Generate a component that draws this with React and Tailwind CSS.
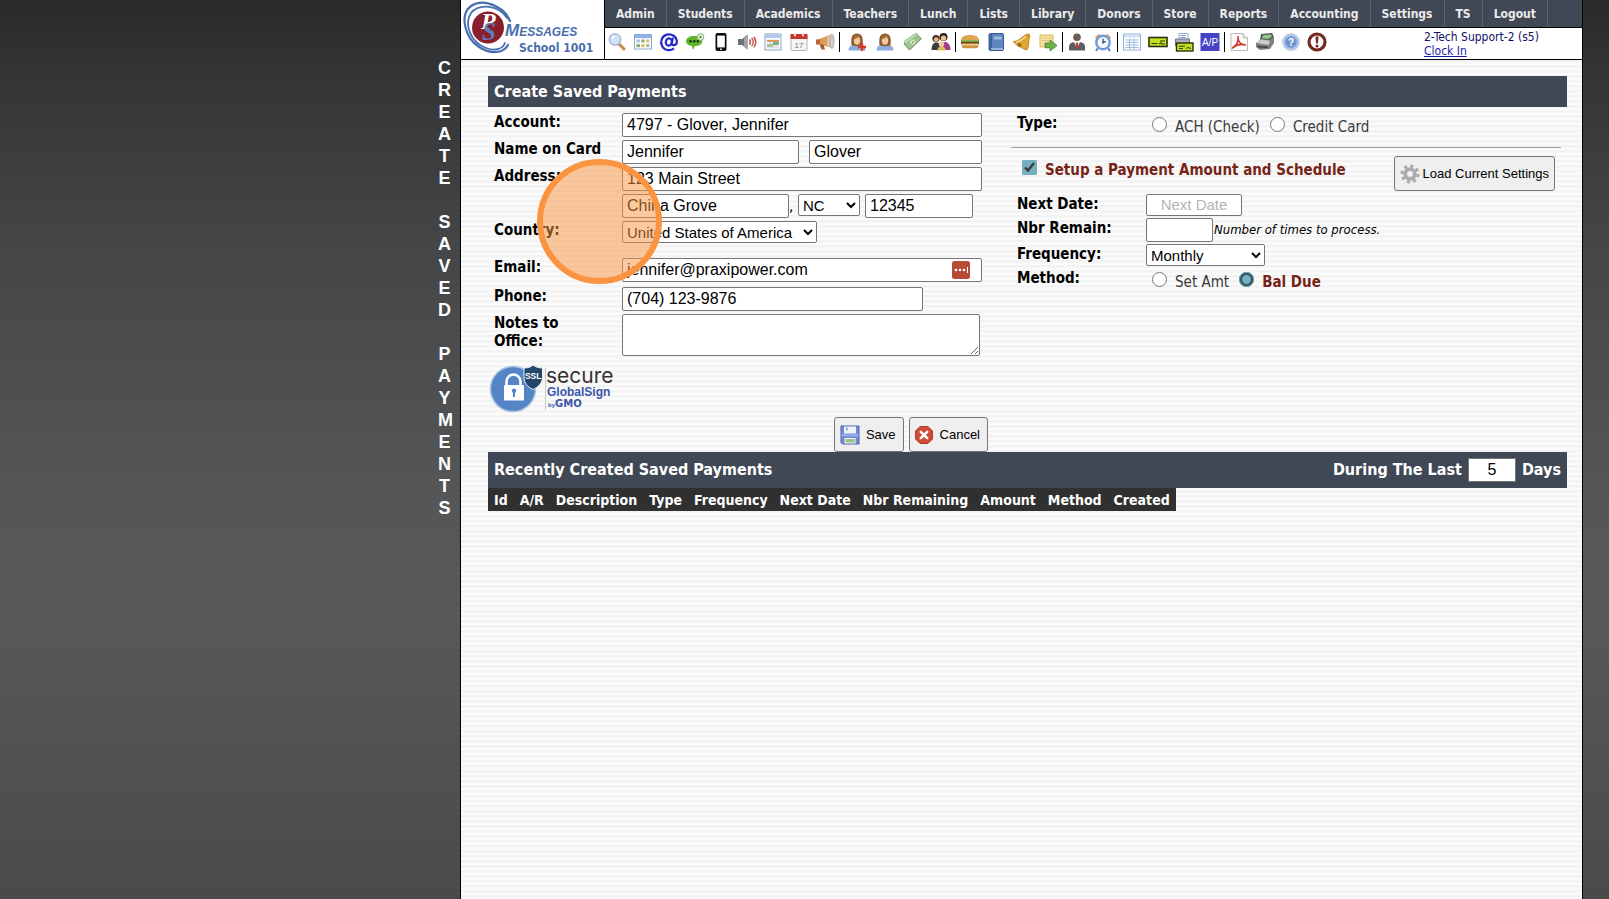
import React from "react";

const NAV = [
  "Admin", "Students", "Academics", "Teachers", "Lunch", "Lists", "Library", "Donors",
  "Store", "Reports", "Accounting", "Settings", "TS", "Logout",
];

const COLUMNS = [
  "Id", "A/R", "Description", "Type", "Frequency", "Next Date", "Nbr Remaining", "Amount", "Method", "Created",
];

function Icon({ children }) {
  return (
    <svg viewBox="0 0 20 20" className="h-5 w-5" aria-hidden="true">
      {children}
    </svg>
  );
}

const SearchIcon = () => (
  <Icon>
    <path d="M12 12l5 5" stroke="#c98a4c" strokeWidth="3" strokeLinecap="round" />
    <circle cx="8" cy="7.5" r="5.7" fill="#cfe3f8" stroke="#a9bcdc" strokeWidth="1.6" />
    <path d="M5 7a3.4 3.4 0 0 1 3-2.8" stroke="#fff" strokeWidth="1.4" fill="none" />
  </Icon>
);

const TableIcon = () => (
  <Icon>
    <rect x="1.5" y="2.5" width="17" height="14.5" fill="#fff" stroke="#8aa9d6" />
    <rect x="2" y="3" width="16" height="3.2" fill="#8db2e3" />
    <rect x="3.5" y="7.5" width="3.4" height="3" fill="#9fc7e8" />
    <rect x="8.2" y="7.5" width="3.4" height="3" fill="#8bb07c" />
    <rect x="13" y="7.5" width="3.4" height="3" fill="#e3c770" />
    <rect x="3.5" y="12.2" width="3.4" height="3" fill="#86a86a" />
    <rect x="8.2" y="12.2" width="3.4" height="3" fill="#e2bf6b" />
    <rect x="13" y="12.2" width="3.4" height="3" fill="#9cc4a4" />
  </Icon>
);

const AtIcon = () => (
  <Icon>
    <ellipse cx="9.800" cy="10" rx="3" ry="3.600" fill="none" stroke="#2a2ac8" strokeWidth="2.200" transform="rotate(15 9.800 10)" />
    <path d="M13.8 5.800l-1 5.800c-.2 2.500 5 2.200 5.100-2A7.900 7.900 0 1 0 15 16.400" fill="none" stroke="#2a2ac8" strokeWidth="2.200" />
  </Icon>
);

const ChatIcon = () => (
  <Icon>
    <path d="M9 4c5 0 8.400 2 8.400 5S14 14 10 14l-2 4-1-4C3.400 13.600 1 11.800 1 9.200 1 6 4.500 4 9 4z" fill="#62b52a" />
    <circle cx="15.500" cy="5" r="3.400" fill="#d9ecd0" stroke="#76a860" strokeWidth=".8" />
    <circle cx="15.500" cy="5" r="1.100" fill="#56704a" />
    <circle cx="5.500" cy="9.200" r="1.300" fill="#1c3a0c" />
    <circle cx="9.200" cy="9.200" r="1.300" fill="#1c3a0c" />
    <circle cx="12.900" cy="9.200" r="1.300" fill="#1c3a0c" />
  </Icon>
);

const PhoneIcon = () => (
  <Icon>
    <rect x="4.500" y="1" width="11" height="18" rx="2" fill="#0c0c0c" />
    <rect x="6.200" y="3.600" width="7.600" height="11.800" fill="#fff" />
    <circle cx="10" cy="17.200" r=".9" fill="#fff" />
  </Icon>
);

const SpeakerIcon = () => (
  <Icon>
    <path d="M1 7h4l5.500-4.500v15L5 13H1z" fill="#6f7377" />
    <path d="M7 5.400l3.500-2.900v15L7 14.600z" fill="#a2a5a9" />
    <path d="M12.400 7.500a4 4 0 0 1 0 5M14.600 6a6 6 0 0 1 0 8M16.800 4.800a8 8 0 0 1 0 10.400" fill="none" stroke="#c8504e" strokeWidth="1.500" />
  </Icon>
);

const ScheduleIcon = () => (
  <Icon>
    <rect x="2" y="2" width="16" height="16" fill="#fbfbff" stroke="#8ea4cf" />
    <rect x="2.500" y="2.500" width="15" height="3.500" fill="#b4c8ec" />
    <path d="M4 9h12M4 12h12M4 15h12M7 7v10M10 7v10M13 7v10" stroke="#c3cede" strokeWidth=".8" />
    <rect x="4" y="8" width="12" height="2" fill="#d79a5c" />
    <rect x="10" y="10" width="6" height="3" fill="#7fae8a" />
    <rect x="4" y="12" width="6" height="3" fill="#a5c38f" />
  </Icon>
);

const CalendarIcon = () => (
  <Icon>
    <rect x="2" y="2.500" width="16" height="16" rx="1" fill="#f5f5f5" stroke="#b5b5b5" />
    <path d="M1.500 2h17v5h-17z" fill="#c33a2c" />
    <rect x="5" y=".5" width="2" height="4" rx="1" fill="#f3d9d5" />
    <rect x="13" y=".5" width="2" height="4" rx="1" fill="#f3d9d5" />
    <text x="10" y="15.500" fontSize="8" textAnchor="middle" fill="#777" fontFamily="Liberation Sans, sans-serif">17</text>
  </Icon>
);

const MegaphoneIcon = () => (
  <Icon>
    <path d="M2 8l12-5v12L2 12z" fill="#d99a5c" />
    <path d="M1 7.500h4v5H1z" fill="#b5642a" />
    <path d="M4.500 12.500h4l1.500 5H6.500z" fill="#a05a2c" />
    <path d="M12 3.800v10.400l5 2.300V2z" fill="#e6c09a" />
    <ellipse cx="17" cy="9.300" rx="2" ry="7.300" fill="#cfcfd4" stroke="#a0a0a8" strokeWidth=".8" />
  </Icon>
);

const Person = () => (
  <>
    <path d="M1.500 18.500c0-4 2.500-6 8.500-6s8.500 2 8.500 6z" fill="#8cade0" />
    <path d="M4.500 13C3.500 5 5.500 1.500 10 1.500S16.500 5 15.500 13c-1.500 1.500-9.500 1.500-11 0z" fill="#8f5a2c" />
    <ellipse cx="10" cy="8.500" rx="3.200" ry="4.200" fill="#f0c9a0" />
    <path d="M6.500 7.200c2 0 4-1 5-2.500 .5 1.500 1.500 2.300 2.300 2.500L13 3.500H7.500z" fill="#a86e38" />
  </>
);

const PersonAddIcon = () => (
  <Icon>
    <Person />
    <path d="M15 11v8M11 15h8" stroke="#d8382c" strokeWidth="2.400" />
  </Icon>
);

const PersonIcon = () => (
  <Icon>
    <Person />
  </Icon>
);

const MoneyIcon = () => (
  <Icon>
    <path d="M1 12L13 2l5.500 4.500L6.500 18z" fill="#9cc58d" stroke="#6f9a60" />
    <path d="M1 9.500L13 1l2 1.500L2.500 12.500z" fill="#c1dcb4" stroke="#7faa70" strokeWidth=".7" />
    <ellipse cx="9.800" cy="10" rx="2.800" ry="2.200" fill="#dcebd4" transform="rotate(-40 9.800 10)" />
    <path d="M9 11.500l1.800-3" stroke="#5d8a50" />
  </Icon>
);

const GroupIcon = () => (
  <Icon>
    <circle cx="12.500" cy="5" r="4" fill="#2c2320" />
    <circle cx="12.500" cy="6.200" r="2.600" fill="#f0c095" />
    <path d="M9 17c0-4 2-7 5-7s5.500 3 5.500 8h-9z" fill="#a23c94" />
    <circle cx="5" cy="6.500" r="3.600" fill="#4a2c1c" />
    <circle cx="5.200" cy="7.500" r="2.300" fill="#eab98c" />
    <path d="M.5 18c0-5 2-7.500 5-7.500S10 13 10 18z" fill="#3c3c40" />
    <circle cx="10.500" cy="12.300" r="2.700" fill="#f0c8a0" />
    <path d="M6.500 18.500c0-3 1.500-4 4-4s4 1 4 4z" fill="#d9c25c" />
  </Icon>
);

const BurgerIcon = () => (
  <Icon>
    <path d="M1 8.500C1 4.500 5 3 10 3s9 1.500 9 5.500z" fill="#e0a552" />
    <rect x="1" y="8.200" width="18" height="2" fill="#78a63c" />
    <rect x="1" y="10" width="18" height="2.200" fill="#6d3a20" />
    <path d="M1 11.500h18l-3 1.500-4-1-4 1.500-4-1z" fill="#f0c944" />
    <path d="M1.500 13.200h17c0 2-1 3-3 3h-11c-2 0-3-1-3-3z" fill="#cf9140" />
  </Icon>
);

const BookIcon = () => (
  <Icon>
    <rect x="3" y="1.500" width="14.500" height="17" rx="1.500" fill="#5f86c0" stroke="#34588f" />
    <rect x="3.500" y="2" width="2.500" height="16" fill="#3d639e" />
    <rect x="8" y="4.500" width="7.500" height="3" fill="#9dbbe4" />
    <path d="M5 17h12" stroke="#d9e4f4" />
  </Icon>
);

const BellIcon = () => (
  <Icon>
    <path d="M1 9.500c6 0 8-4.500 14-7.500l3 2c-2 5-.5 9-3 14C11 17 4 13 1 9.500z" fill="#dfa734" stroke="#b07c1c" strokeWidth=".8" />
    <path d="M4 10c4-.5 7-3 10-5.500" stroke="#f8dc8c" strokeWidth="1.600" fill="none" />
    <circle cx="7.500" cy="13" r="2" fill="#a06a14" />
    <circle cx="16.500" cy="3" r="1.600" fill="#cd9327" />
  </Icon>
);

const NoteArrowIcon = () => (
  <Icon>
    <path d="M2 3h13v12H2z" fill="#f9e3a0" stroke="#d9b35c" />
    <path d="M4 6h9M4 8.500h7" stroke="#e2c27a" />
    <path d="M7 11h5V8l7 5.500L12 19v-3.200H7z" fill="#6db24a" stroke="#3f8128" strokeWidth=".8" />
  </Icon>
);

const ManagerIcon = () => (
  <Icon>
    <circle cx="10" cy="5.200" r="3.800" fill="#6c5a50" />
    <path d="M2 18.500V15c0-4 3-5 8-5s8 1 8 5v3.500z" fill="#5a5d63" />
    <path d="M7 10l3 7 3-7z" fill="#f4f4f4" />
    <path d="M9.200 10.500h1.600l.8 4.500-1.600 2-1.600-2z" fill="#c73a30" />
  </Icon>
);

const ClockIcon = () => (
  <Icon>
    <path d="M2 5.500L5.500 2 8 3.500 3.500 8zM18 5.500L14.500 2 12 3.500 16.500 8z" fill="#e0a050" />
    <path d="M5 16l-2 3M15 16l2 3" stroke="#5a82c0" strokeWidth="2" />
    <circle cx="10" cy="10.500" r="6.700" fill="#f5f9ff" stroke="#6e9bdc" strokeWidth="2.400" />
    <path d="M10 6.800v4l2.800-1.600" stroke="#33435c" strokeWidth="1.300" fill="none" />
  </Icon>
);

const SheetIcon = () => (
  <Icon>
    <rect x="1.500" y="2" width="17" height="16" fill="#fff" stroke="#8fb0dc" />
    <rect x="2" y="2.500" width="16" height="3" fill="#cfe0f4" />
    <path d="M3.500 8h13M3.500 10.500h13M3.500 13h13M3.500 15.500h13M7.500 6.500v10.500M12 6.500v10.500" stroke="#9fbce2" />
  </Icon>
);

const CheckIcon = () => (
  <Icon>
    <rect x="1" y="5.500" width="18" height="9" fill="#c4e020" stroke="#2b300c" strokeWidth="1.600" />
    <path d="M3.500 11.500h6M12 9h5M11 12l2-1 1 1h3" stroke="#353b0c" strokeWidth="1.200" fill="none" />
  </Icon>
);

const PrintCheckIcon = () => (
  <Icon>
    <path d="M5 1.500h9v6H5z" fill="#fff" stroke="#9fa8b8" />
    <path d="M6.500 3.500h5M6.500 5.500h5" stroke="#6a94d4" />
    <path d="M1.500 7h14v7h-14z" fill="#a9aec0" stroke="#70768a" />
    <rect x="2.500" y="11" width="16.500" height="8" fill="#c4e020" stroke="#2b300c" strokeWidth="1.400" />
    <path d="M5 14.200h6M5 16.500h4M12 16.500l2-1 3 1" stroke="#353b0c" fill="none" />
  </Icon>
);

const ApIcon = () => (
  <Icon>
    <rect x=".5" y="1" width="19" height="18" fill="#4644c4" />
    <text x="10" y="13.600" fontSize="10" textAnchor="middle" fill="#fff" fontFamily="Liberation Sans, sans-serif">A/P</text>
  </Icon>
);

const PdfIcon = () => (
  <Icon>
    <path d="M2 1.500h12l4.500 4.500v12.500H2z" fill="#fcfcfc" stroke="#b9b9b9" />
    <path d="M14 1.500V6h4.500" fill="#e8e8e8" stroke="#b9b9b9" />
    <path d="M3.500 16c4-2.500 6-7 5.500-11.500C8.500 9 11 12.500 16.500 13 12 11.500 8 12.500 3.500 16z" fill="none" stroke="#cf3328" strokeWidth="1.500" strokeLinejoin="round" />
  </Icon>
);

const ScannerIcon = () => (
  <Icon>
    <path d="M6 2l11-1 2 4-5 4-9-1z" fill="#4e5a50" />
    <path d="M8 3.200l8-.7 1 2-4 2.500-6-.7z" fill="#98c890" />
    <path d="M1 11l5-4 9 1 4-4v7l-4 6-10 1-4-3z" fill="#7d817c" />
    <path d="M1 11l5-3.500 9 1.200-1.500 4.300z" fill="#c9cdc8" />
    <path d="M2.500 14.500l10.500 1" stroke="#3c403c" strokeWidth="1.600" />
  </Icon>
);

const HelpIcon = () => (
  <Icon>
    <circle cx="10" cy="10" r="8.300" fill="#a9c2ea" stroke="#c6d0e0" strokeWidth="1.400" />
    <circle cx="10" cy="10" r="5.800" fill="#6d95d4" />
    <text x="10" y="13.600" fontSize="10" fontWeight="700" textAnchor="middle" fill="#fff" fontFamily="Liberation Sans, sans-serif">?</text>
  </Icon>
);

const AlertIcon = () => (
  <Icon>
    <circle cx="10" cy="10" r="8" fill="#fff" stroke="#702a22" strokeWidth="3.200" />
    <path d="M8.400 4.500h3.200l-.7 7H9.100z" fill="#702a22" />
    <circle cx="10" cy="14" r="1.500" fill="#702a22" />
  </Icon>
);

const GROUPS = [
  {
    wide: false,
    items: [
      ["Search", SearchIcon], ["Dashboard", TableIcon], ["Email", AtIcon], ["Chat", ChatIcon], ["Text", PhoneIcon],
      ["Voice", SpeakerIcon], ["Schedule", ScheduleIcon], ["Calendar", CalendarIcon], ["Announce", MegaphoneIcon],
    ],
  },
  { wide: true, items: [["Add person", PersonAddIcon], ["Person", PersonIcon], ["Payments", MoneyIcon], ["Families", GroupIcon]] },
  { wide: false, items: [["Lunch", BurgerIcon], ["Library", BookIcon], ["Bell", BellIcon], ["Forward note", NoteArrowIcon]] },
  { wide: false, items: [["Staff", ManagerIcon], ["Time clock", ClockIcon]] },
  { wide: false, items: [["Ledger", SheetIcon], ["Check", CheckIcon], ["Print check", PrintCheckIcon], ["Accounts payable", ApIcon]] },
  { wide: false, items: [["PDF", PdfIcon], ["Scanner", ScannerIcon], ["Help", HelpIcon], ["Alert", AlertIcon]] },
];

function Logo() {
  return (
    <svg viewBox="0 0 143 59" className="h-[59px] w-[143px]" role="img" aria-label="PS Messages">
      <circle cx="27" cy="27.500" r="16" fill="#8a1f2b" />
      <g fill="none" stroke="#4a6fae" strokeLinecap="round">
        <path d="M49 21C43 6 22-2 10 6-2 15 4 38 18 47c11 7 24 7 29-2" strokeWidth="2.200" />
        <path d="M46 18C38 5 18 3 10 13 3 24 9 42 25 48c8 3 16 2 19-5" strokeWidth="1.800" />
      </g>
      <text x="20" y="29" fontSize="24" fontWeight="700" fontStyle="italic" fill="#fff" fontFamily="Liberation Serif, serif">P</text>
      <text x="21" y="40" fontSize="25" fontWeight="700" fontStyle="italic" fill="#5d80bd" fontFamily="Liberation Serif, serif">S</text>
      <text x="44" y="35.500" fontSize="17" fontWeight="700" fontStyle="italic" fill="#4a6fae" fontFamily="Liberation Sans, sans-serif">
        M<tspan fontSize="12">ESSAGES</tspan>
      </text>
    </svg>
  );
}

function SslSeal() {
  return (
    <svg viewBox="0 0 129 49" className="h-[49px] w-[129px]" role="img" aria-label="SSL secure GlobalSign by GMO">
      <circle cx="25" cy="25" r="22.500" fill="#5585c6" stroke="#a9c2e4" strokeWidth="1.500" />
      <path d="M18.500 22v-4.500a7 7 0 0 1 14 0V22" fill="none" stroke="#fff" strokeWidth="2.600" />
      <rect x="16" y="21" width="20" height="15.500" rx="1" fill="#fff" />
      <circle cx="26" cy="26.800" r="2.200" fill="#5585c6" />
      <path d="M25 27h2v6h-2z" fill="#5585c6" />
      <path d="M36 4c4 0 7-1 9-3 2.500 2 5.500 3 9.500 3v9c0 6-4 10-9.500 12.500C39.500 23 36 19 36 13z" fill="#24466b" stroke="#e8eef5" />
      <text x="45.200" y="15" fontSize="8.500" fontWeight="700" textAnchor="middle" fill="#fff" fontFamily="Liberation Sans, sans-serif">SSL</text>
      <path d="M57.500 4v42" stroke="#c9c9c9" />
      <text x="58" y="19" fontSize="21" fill="#333" fontFamily="Inter, sans-serif">secure</text>
      <text x="59" y="32" fontSize="12" fontWeight="700" fill="#3c56a8" fontFamily="Liberation Sans, sans-serif">GlobalSign</text>
      <text x="60" y="42.500" fontSize="6" fontWeight="700" fill="#3c56a8" fontFamily="Liberation Sans, sans-serif">by</text>
      <text x="67" y="42.500" fontSize="10" fontWeight="700" fill="#3c56a8" fontFamily="DejaVu Sans, sans-serif">GMO</text>
    </svg>
  );
}

const field = "h-6 rounded-[2px] border border-[#767676] bg-white px-1 font-['Liberation_Sans',sans-serif] text-base text-black";
const select = "h-[22px] rounded-[2px] border border-[#767676] bg-white font-['Liberation_Sans',sans-serif] text-[15px] text-black";
const label = "w-[128px] shrink-0 self-start text-[15px] leading-[18px] font-bold";
const labelR = "w-[129px] shrink-0 self-start text-[15px] leading-5 font-bold";
const choice = "flex items-center gap-2 pt-1 text-[15px] leading-5";
const button = "flex items-center rounded-[3px] border border-[#767676] bg-[#efefef] font-['Liberation_Sans',sans-serif] text-[13px] text-black";
const radio = "h-[15px] w-[15px] shrink-0 appearance-none self-start rounded-full border border-[#767676] bg-white checked:border-[3px] checked:border-[#31525c] checked:bg-[#74b0c0] checked:outline checked:outline-[#74b0c0] checked:-outline-offset-1";

export default function App() {
  return (
    <div className="flex min-h-screen bg-[linear-gradient(#2a2a2a_0px,#333436_70px,#454648_250px,#555657_500px,#585858_620px,#4a4a4a_899px)] font-['DejaVu_Sans_Condensed','DejaVu_Sans',sans-serif]">
      <aside className="w-[460px] shrink-0 pt-[57px] pr-[9px]">
        <h1 className="ml-auto w-[13px] text-center font-['Liberation_Sans',sans-serif] text-lg leading-[22px] font-bold text-white">
          {"CREATE SAVED PAYMENTS".split("").map((c, i) => (
            <span key={i} className="block h-[22px]">{c}</span>
          ))}
        </h1>
      </aside>

      <div className="min-w-0 flex-1 border-x border-black bg-[repeating-linear-gradient(#f3f3f3_0px,#f3f3f3_2px,#fafafa_3px,#fcfcfc_5px)]">
        <header className="flex h-[60px] border-b border-black bg-white">
          <div className="relative w-[143px] shrink-0">
            <Logo />
            <span className="absolute top-10 left-[58px] text-xs leading-4 font-bold whitespace-nowrap text-[#4a6fae]">School 1001</span>
          </div>
          <div className="min-w-0 flex-1 border-l border-black">
            <nav className="flex h-7 border-b border-black bg-[#414855]">
              {NAV.map((n) => (
                <a key={n} href="#" className="flex items-center border-r border-[#5b616d] px-[11px] text-xs font-bold whitespace-nowrap text-[#ebebeb]">
                  {n}
                </a>
              ))}
            </nav>
            <div className="flex h-[31px]">
              <div className="flex w-[819px] items-center pb-[3px] pl-[2px]">
                {GROUPS.map((g, gi) => (
                  <React.Fragment key={gi}>
                    {gi > 0 && <span className="mx-1 h-5 w-px bg-black" />}
                    <div className={g.wide ? "flex gap-2 pl-[3px]" : "flex gap-[6px]"}>
                      {g.items.map(([name, I]) => (
                        <button key={name} type="button" aria-label={name} className="h-5 w-5">
                          <I />
                        </button>
                      ))}
                    </div>
                  </React.Fragment>
                ))}
              </div>
              <div className="pt-[2px] text-xs leading-[14px] text-[#10106a]">
                <div>2-Tech Support-2 (s5)</div>
                <a href="#" className="text-[#1a1aa6] underline">Clock In</a>
              </div>
            </div>
          </div>
        </header>

        <main className="relative pt-4 pr-[15px] pl-[27px] text-black">
          <h2 className="h-[31px] bg-[#414855] pl-[6px] text-base leading-[31px] font-bold text-white">Create Saved Payments</h2>

          <form onSubmit={(e) => e.preventDefault()}>
            <div className="flex pt-[6px]">
              <div className="w-[523px] shrink-0 pl-[6px]">
                <div className="flex flex-col gap-[3px]">
                  <div className="flex">
                    <label htmlFor="account" className={label}>Account:</label>
                    <input id="account" className={field + " w-[360px]"} defaultValue="4797 - Glover, Jennifer" />
                  </div>
                  <div className="flex">
                    <label htmlFor="first" className={label}>Name on Card</label>
                    <input id="first" className={field + " w-[177px]"} defaultValue="Jennifer" />
                    <input aria-label="Last name" className={field + " ml-[10px] w-[173px]"} defaultValue="Glover" />
                  </div>
                  <div className="flex">
                    <label htmlFor="street" className={label}>Address:</label>
                    <input id="street" className={field + " w-[360px]"} defaultValue="123 Main Street" />
                  </div>
                  <div className="flex pl-[128px]">
                    <input aria-label="City" className={field + " w-[167px]"} defaultValue="China Grove" />
                    <span className="w-[9px] text-[15px] leading-6">,</span>
                    <select aria-label="State" className={select + " w-[62px]"} defaultValue="NC">
                      <option>NC</option>
                    </select>
                    <input aria-label="Zip code" className={field + " ml-[5px] w-[108px]"} defaultValue="12345" />
                  </div>
                  <div className="flex pb-3">
                    <label htmlFor="country" className={label}>Country:</label>
                    <select id="country" className={select + " w-[195px]"} defaultValue="United States of America">
                      <option>United States of America</option>
                    </select>
                  </div>
                  <div className="flex pb-[2px]">
                    <label htmlFor="email" className={label}>Email:</label>
                    <div className="relative">
                      <input id="email" type="email" className={field + " w-[360px]"} defaultValue="jennifer@praxipower.com" />
                      <button type="button" aria-label="Fill password" className="absolute top-[3px] right-3 h-[18px] w-[18px]">
                        <svg viewBox="0 0 18 18" className="h-[18px] w-[18px]" aria-hidden="true">
                          <rect width="18" height="18" rx="2.500" fill="#b84a3a" />
                          <circle cx="4" cy="9" r="1.300" fill="#fff" />
                          <circle cx="8" cy="9" r="1.300" fill="#fff" />
                          <circle cx="12" cy="9" r="1.300" fill="#fff" />
                          <path d="M15.500 6v6" stroke="#fff" />
                        </svg>
                      </button>
                    </div>
                  </div>
                  <div className="flex">
                    <label htmlFor="phone" className={label}>Phone:</label>
                    <input id="phone" className={field + " w-[301px]"} defaultValue="(704) 123-9876" />
                  </div>
                  <div className="flex">
                    <label htmlFor="notes" className={label}>Notes to<br />Office:</label>
                    <textarea id="notes" className="block h-[42px] w-[358px] resize rounded-[2px] border border-[#767676] bg-white" />
                  </div>
                </div>
              </div>

              <div className="min-w-0 flex-1 pr-[6px]">
                <div role="radiogroup" aria-label="Type" className="flex h-[34px] items-start pl-[6px]">
                  <span className={labelR}>Type:</span>
                  <label className={choice + " ml-[6px] text-[#3a3a3a]"}>
                    <input type="radio" name="type" className={radio} />ACH (Check)
                  </label>
                  <label className={choice + " ml-[10px] text-[#3a3a3a]"}>
                    <input type="radio" name="type" className={radio} />Credit Card
                  </label>
                </div>
                <hr className="border-t border-[#9b9b9b]" />
                <div className="flex items-start justify-between pt-2 pr-[6px] pl-[11px]">
                  <label className="flex items-start gap-2 pt-1 text-[15px] leading-5 font-bold text-[#752417]">
                    <input type="checkbox" defaultChecked className="h-[15px] w-[15px] accent-[#74b0c0]" />
                    Setup a Payment Amount and Schedule
                  </label>
                  <button type="button" className={button + " h-[35px] gap-[3px] px-[5px]"}>
                    <svg viewBox="0 0 20 20" className="h-5 w-5" aria-hidden="true">
                      <circle cx="10" cy="10" r="8" fill="none" stroke="#a9a9a9" strokeWidth="3" strokeDasharray="3.100 3.183" />
                      <circle cx="10" cy="10" r="5" fill="#d4d4d4" stroke="#ababab" strokeWidth="3.500" />
                      <circle cx="10" cy="10" r="2.400" fill="#f4f4f4" />
                    </svg>
                    Load Current Settings
                  </button>
                </div>
                <div className="flex flex-col gap-[2px] pt-[3px] pl-[6px]">
                  <div className="flex">
                    <label htmlFor="next" className={labelR}>Next Date:</label>
                    <input id="next" placeholder="Next Date" className={select + " w-24 text-center placeholder:text-[#b4b4b4]"} />
                  </div>
                  <div className="flex items-center">
                    <label htmlFor="nbr" className={labelR}>Nbr Remain:</label>
                    <input id="nbr" className={field + " w-[67px]"} />
                    <span className="pl-px text-[13px] italic">Number of times to process.</span>
                  </div>
                  <div className="flex">
                    <label htmlFor="freq" className={labelR}>Frequency:</label>
                    <select id="freq" className={select + " w-[119px]"} defaultValue="Monthly">
                      <option>Monthly</option>
                    </select>
                  </div>
                  <div role="radiogroup" aria-label="Method" className="flex">
                    <span className={labelR}>Method:</span>
                    <label className={choice + " ml-[6px] text-[#3a3a3a]"}>
                      <input type="radio" name="method" className={radio} />Set Amt
                    </label>
                    <label className={choice + " ml-[10px] font-bold text-[#752417]"}>
                      <input type="radio" name="method" defaultChecked className={radio} />Bal Due
                    </label>
                  </div>
                </div>
              </div>
            </div>

            <div className="pt-2">
              <SslSeal />
            </div>
            <div className="flex w-[500px] justify-end gap-[5px] pt-1">
              <button type="submit" className={button + " h-[35px] gap-[6px] pr-[7px] pl-[5px]"}>
                <svg viewBox="0 0 20 20" className="h-5 w-5" aria-hidden="true">
                  <path d="M1 1h18v18H2.500L1 17.500z" fill="#6f8bd6" stroke="#4a62a8" />
                  <rect x="4" y="1.500" width="12" height="7" fill="#eef3fc" />
                  <rect x="6" y="2.500" width="1.500" height="3" fill="#7c92cc" />
                  <rect x="1.500" y="9" width="17" height="2.500" fill="#93aae6" />
                  <rect x="4.500" y="13" width="11" height="5.500" fill="#f4f7ee" />
                  <rect x="5.500" y="14" width="9" height="3.500" fill="#9cc48a" />
                </svg>
                Save
              </button>
              <button type="button" className={button + " h-[35px] gap-[6px] pr-[7px] pl-1"}>
                <svg viewBox="0 0 20 20" className="h-5 w-5" aria-hidden="true">
                  <path d="M6 1.500h8L18.500 6v8L14 18.500H6L1.500 14V6z" fill="#cf4b38" stroke="#b23a2a" />
                  <path d="M6.800 6.800l6.400 6.400M13.200 6.800l-6.400 6.400" stroke="#fff" strokeWidth="2.600" strokeLinecap="round" />
                </svg>
                Cancel
              </button>
            </div>
          </form>

          <section>
            <div className="flex h-9 items-center justify-between bg-[#414855] px-[6px] pb-px text-base font-bold text-white">
              <h2>Recently Created Saved Payments</h2>
              <label className="flex items-center gap-[6px]">
                During The Last
                <input className="h-6 w-12 border border-[#767676] bg-white text-center font-['Liberation_Sans',sans-serif] text-base font-normal text-black" defaultValue="5" />
                Days
              </label>
            </div>
            <table className="bg-[#303030] text-sm text-white">
              <thead>
                <tr>
                  {COLUMNS.map((c) => (
                    <th key={c} scope="col" className="h-[23px] px-[6px] text-left font-bold whitespace-nowrap">{c}</th>
                  ))}
                </tr>
              </thead>
            </table>
          </section>

          <div className="pointer-events-none absolute top-[99px] left-[76px] h-[125px] w-[125px] rounded-full border-[6px] border-[#fa9440] bg-[#fa9440]/50" />
        </main>
      </div>
      <div className="w-[26px] shrink-0" />
    </div>
  );
}
